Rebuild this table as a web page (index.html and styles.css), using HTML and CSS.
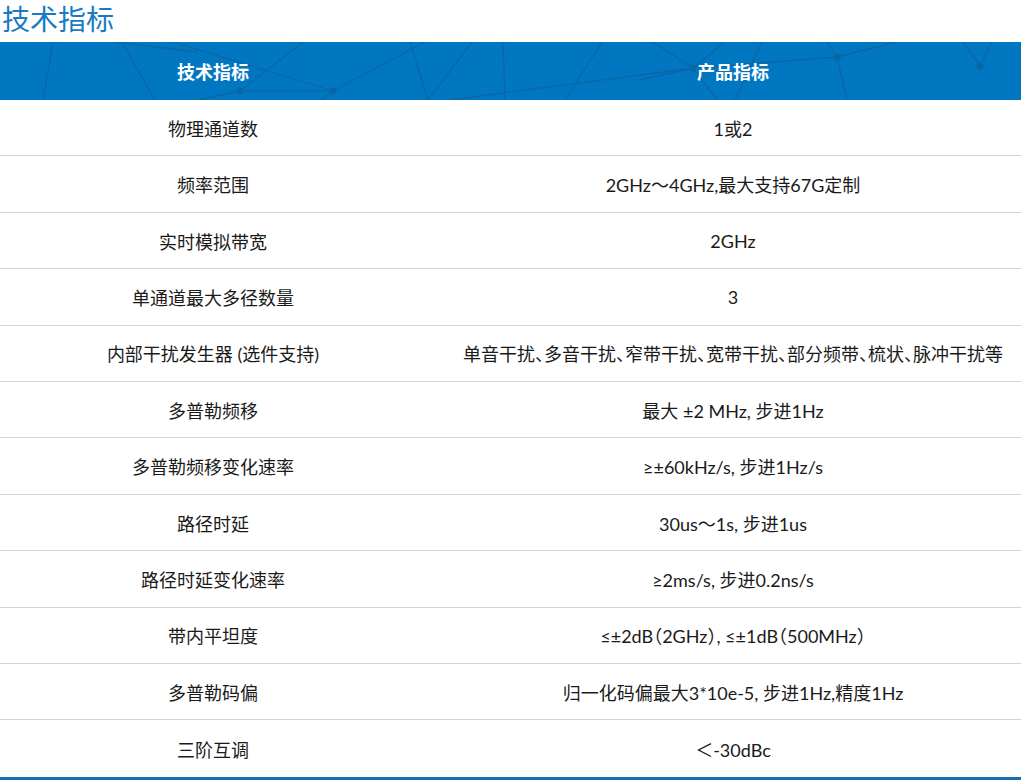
FILE: index.html
```html
<!DOCTYPE html>
<html lang="zh-CN">
<head>
<meta charset="utf-8">
<title>技术指标</title>
<link rel="stylesheet" href="styles.css">
</head>
<body>
<h2 class="title">技术指标</h2>
<div class="spec">
  <div class="head">
    <svg class="net" viewBox="0 0 1021 58" preserveAspectRatio="none" aria-hidden="true">
      <g stroke="#0b66a8" stroke-width="1.3" fill="none">
        <line x1="53" y1="0" x2="43" y2="58"/>
        <line x1="122" y1="0" x2="155" y2="58"/>
        <line x1="115" y1="0" x2="198" y2="10"/>
        <line x1="173" y1="0" x2="333" y2="49"/>
        <line x1="198" y1="58" x2="240" y2="49"/>
        <line x1="240" y1="49" x2="333" y2="49"/>
        <line x1="240" y1="49" x2="303" y2="0"/>
        <line x1="333" y1="49" x2="322" y2="58"/>
        <line x1="333" y1="49" x2="425" y2="0"/>
        <line x1="410" y1="0" x2="428" y2="58"/>
        <line x1="472" y1="0" x2="428" y2="58"/>
        <line x1="503" y1="0" x2="505" y2="58"/>
        <line x1="602" y1="0" x2="565" y2="58"/>
        <line x1="450" y1="58" x2="693" y2="26"/>
        <line x1="653" y1="0" x2="693" y2="26"/>
        <line x1="693" y1="26" x2="725" y2="0"/>
        <line x1="693" y1="26" x2="717" y2="58"/>
        <line x1="693" y1="26" x2="640" y2="38"/>
        <line x1="735" y1="58" x2="762" y2="0"/>
        <line x1="693" y1="26" x2="837" y2="15"/>
        <line x1="837" y1="15" x2="827" y2="0"/>
        <line x1="837" y1="15" x2="897" y2="0"/>
        <line x1="837" y1="15" x2="847" y2="58"/>
        <line x1="980" y1="24" x2="963" y2="0"/>
        <line x1="980" y1="24" x2="992" y2="0"/>
      </g>
      <g fill="#0b66a8">
        <circle cx="240" cy="49" r="3.5"/>
        <circle cx="333" cy="49" r="3.5"/>
        <circle cx="693" cy="26" r="3.5"/>
        <circle cx="837" cy="15" r="3.5"/>
        <circle cx="980" cy="24" r="3.5"/>
      </g>
    </svg>
    <div class="cell c1">技术指标</div>
    <div class="cell c2">产品指标</div>
  </div>
  <div class="row"><div class="cell c1">物理通道数</div><div class="cell c2">1或2</div></div>
  <div class="row"><div class="cell c1">频率范围</div><div class="cell c2">2GHz～4GHz,最大支持67G定制</div></div>
  <div class="row"><div class="cell c1">实时模拟带宽</div><div class="cell c2">2GHz</div></div>
  <div class="row"><div class="cell c1">单通道最大多径数量</div><div class="cell c2">3</div></div>
  <div class="row"><div class="cell c1">内部干扰发生器 (选件支持)</div><div class="cell c2">单音干扰、多音干扰、窄带干扰、宽带干扰、部分频带、梳状、脉冲干扰等</div></div>
  <div class="row"><div class="cell c1">多普勒频移</div><div class="cell c2">最大 ±2 MHz, 步进1Hz</div></div>
  <div class="row"><div class="cell c1">多普勒频移变化速率</div><div class="cell c2">≥±60kHz/s, 步进1Hz/s</div></div>
  <div class="row"><div class="cell c1">路径时延</div><div class="cell c2">30us～1s, 步进1us</div></div>
  <div class="row"><div class="cell c1">路径时延变化速率</div><div class="cell c2">≥2ms/s, 步进0.2ns/s</div></div>
  <div class="row"><div class="cell c1">带内平坦度</div><div class="cell c2">≤±2dB（2GHz）, ≤±1dB（500MHz）</div></div>
  <div class="row"><div class="cell c1">多普勒码偏</div><div class="cell c2">归一化码偏最大3*10e-5, 步进1Hz,精度1Hz</div></div>
  <div class="row last"><div class="cell c1">三阶互调</div><div class="cell c2">＜-30dBc</div></div>
</div>
</body>
</html>
```
FILE: styles.css
```css
html, body {
  margin: 0;
  padding: 0;
  background: #fff;
}
body {
  font-family: "Lato", "Noto Sans CJK SC", sans-serif;
  color: #1a1a1a;
  overflow: hidden;
}
.title {
  margin: 0;
  padding-left: 2px;
  height: 42px;
  line-height: 36px;
  font-size: 28px;
  font-weight: 400;
  color: #1b7ac2;
  font-family: "Noto Sans CJK SC", sans-serif;
}
.spec {
  border-bottom: 3px solid #1a6db3;
}
.head {
  position: relative;
  display: grid;
  grid-template-columns: 426px 1fr;
  height: 58px;
  background: #0177c2;
  color: #fff;
  font-weight: 700;
  font-family: "Noto Sans CJK SC", sans-serif;
}
.net {
  position: absolute;
  left: 0;
  top: 0;
  width: 100%;
  height: 100%;
}
.head .cell {
  position: relative;
  font-size: 18px;
}
.row {
  display: grid;
  grid-template-columns: 426px 1fr;
  height: 56.42px;
  box-sizing: border-box;
  border-bottom: 1px solid #d3d3d3;
}
.row.last {
  border-bottom: none;
}
.cell {
  display: flex;
  align-items: center;
  justify-content: center;
  font-size: 18px;
  white-space: nowrap;
  font-feature-settings: "halt";
}
.c2 {
  padding-left: 19px;
}
```
